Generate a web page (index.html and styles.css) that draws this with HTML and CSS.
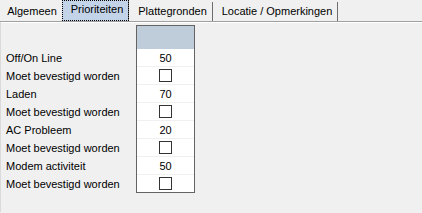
FILE: index.html
```html
<!DOCTYPE html>
<html>
<head>
<meta charset="utf-8">
<link rel="stylesheet" href="styles.css">
</head>
<body>
<div class="tabs">
  <div class="tab t1">Algemeen</div>
  <div class="tab t2 selected">Prioriteiten</div>
  <div class="tab t3">Plattegronden</div>
  <div class="tab t4">Locatie / Opmerkingen</div>
</div>
<div class="panel">
  <div class="labels">
    <div class="label">Off/On Line</div>
    <div class="label">Moet bevestigd worden</div>
    <div class="label">Laden</div>
    <div class="label">Moet bevestigd worden</div>
    <div class="label">AC Probleem</div>
    <div class="label">Moet bevestigd worden</div>
    <div class="label">Modem activiteit</div>
    <div class="label">Moet bevestigd worden</div>
  </div>
  <div class="grid">
    <div class="head"></div>
    <div class="cell">50</div>
    <div class="cell"><span class="check"></span></div>
    <div class="cell">70</div>
    <div class="cell"><span class="check"></span></div>
    <div class="cell">20</div>
    <div class="cell"><span class="check"></span></div>
    <div class="cell">50</div>
    <div class="cell last"><span class="check"></span></div>
  </div>
</div>
</body>
</html>
```
FILE: styles.css
```css
html, body {
  margin: 0;
  padding: 0;
  background: #f0f0f0;
  font-family: "Liberation Sans", Arial, sans-serif;
  font-size: 11px;
  color: #000;
}
body {
  width: 422px;
  height: 213px;
  overflow: hidden;
}
.tabs {
  display: flex;
  align-items: flex-end;
  height: 21px;
  border-bottom: 1px solid #a0a0a0;
  box-shadow: 0 1px 0 #ffffff;
}
.tab {
  box-sizing: border-box;
  height: 19px;
  line-height: 19px;
  text-align: center;
  padding-left: 2px;
  white-space: nowrap;
  border-right: 1px solid #6e6e6e;
}
.t1 { width: 62px; border-right: none; }
.t2 { width: 67px; }
.t3 { width: 84px; padding-left: 4px; }
.t4 { width: 125px; padding-left: 4px; }
.tab.selected {
  height: 21px;
  line-height: 19px;
  padding-bottom: 2px;
  background: #c4d4e8;
  outline: 1px dotted #000;
  outline-offset: -1px;
  padding-left: 4px;
}
.panel {
  display: flex;
  padding-top: 3px;
  height: 190px;
  box-sizing: border-box;
  border-left: 1px solid #dadada;
}
.labels {
  width: 130px;
  padding-left: 5px;
  padding-top: 24px;
}
.label {
  height: 18px;
  line-height: 18px;
  white-space: nowrap;
}
.grid {
  width: 57px;
  border: 1px solid #646464;
  align-self: flex-start;
}
.head {
  height: 23px;
  background: #bfcddb;
}
.cell {
  height: 18px;
  line-height: 18px;
  box-sizing: border-box;
  background: #fff;
  border-bottom: 1px solid #f0f0f0;
  text-align: center;
  display: flex;
  align-items: center;
  justify-content: center;
}
.cell.last {
  height: 17px;
  border-bottom: none;
}
.check {
  display: block;
  width: 11px;
  height: 11px;
  border: 1px solid #333;
  background: #fff;
  margin-top: -1px;
}
```
